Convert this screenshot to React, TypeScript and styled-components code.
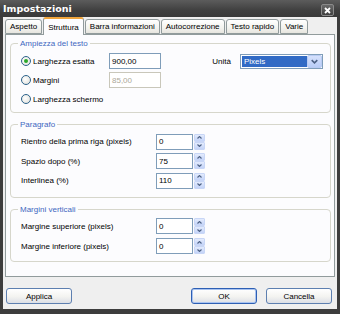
import React from "react";
import styled, { createGlobalStyle } from "styled-components";

const Global = createGlobalStyle`
  html, body { margin: 0; padding: 0; background: #3c3c3c; }
  * { box-sizing: border-box; }
`;

const FONT = `"Liberation Sans", Arial, sans-serif`;

const Window = styled.div`
  width: 340px;
  height: 314px;
  background: #3d3d3d;
  display: flex;
  flex-direction: column;
  padding: 0 3px 5px 3px;
  font-family: ${FONT};
  font-size: 8px;
  color: #000;
`;

const TitleBar = styled.div`
  height: 17px;
  margin: 0 -3px;
  padding: 0 6px 0 3px;
  display: flex;
  align-items: center;
  justify-content: space-between;
  background: linear-gradient(#5c5c5c, #404040 60%, #393939);
`;

const Title = styled.span`
  color: #fff;
  font-family: "DejaVu Sans", sans-serif;
  font-weight: bold;
  font-size: 9.5px;
`;

const CloseButton = styled.div`
  width: 13px;
  height: 12px;
  margin-top: 3px;
  border: 1px solid #8a8a8a;
  border-radius: 2px;
  background: linear-gradient(#6a6a6a, #404040);
  display: flex;
  align-items: center;
  justify-content: center;
`;

const Body = styled.div`
  flex: 1;
  background: #efefef;
  display: flex;
  flex-direction: column;
  padding: 0 2px;
`;

const TabStrip = styled.div`
  height: 17px;
  display: flex;
  align-items: flex-end;
  gap: 1px;
  position: relative;
  z-index: 1;
`;

const Tab = styled.div<{ $active?: boolean }>`
  height: ${(p) => (p.$active ? "18px" : "15px")};
  margin-bottom: ${(p) => (p.$active ? "-1px" : "0")};
  padding: 0 4px;
  border: 1px solid #919b9c;
  border-bottom: ${(p) => (p.$active ? "none" : "1px solid #919b9c")};
  border-top: ${(p) => (p.$active ? "2px solid #f0a53c" : "1px solid #919b9c")};
  border-radius: 3px 3px 0 0;
  background: ${(p) =>
    p.$active ? "#fcfcfe" : "linear-gradient(#ffffff, #f3f3ef 60%, #e6e5df)"};
  display: flex;
  align-items: center;
  white-space: nowrap;
`;

const Panel = styled.div`
  flex: 1;
  border: 1px solid #919b9c;
  background: #fcfcfe;
  padding: 2.5px 3px 0 4px;
  display: flex;
  flex-direction: column;
  gap: 6px;
`;

const Group = styled.fieldset<{ $pt: number; $pb: number }>`
  margin: 0;
  padding: ${(p) => p.$pt}px 7px ${(p) => p.$pb}px 10px;
  border: 1px solid #d6d6cb;
  border-radius: 4px;
  min-width: 0;
`;

const Legend = styled.legend`
  color: #3e67c0;
  padding: 0 2px;
  margin-left: -3px;
  line-height: 11px;
  height: 11px;
`;

const WidthGrid = styled.div`
  display: grid;
  grid-template-columns: 88px 52px 1fr auto 83px;
  grid-auto-rows: 16px;
  row-gap: 3px;
  align-items: center;
`;

const RadioRow = styled.label`
  display: flex;
  align-items: center;
  gap: 2px;
  grid-column: 1;
  white-space: nowrap;
`;

const Radio = styled.span<{ $checked?: boolean }>`
  width: 10px;
  height: 10px;
  border-radius: 50%;
  border: 1px solid #2c628b;
  background: radial-gradient(circle at 40% 40%, #ffffff, #dcdcd6);
  display: flex;
  align-items: center;
  justify-content: center;
  &::after {
    content: "";
    width: 4px;
    height: 4px;
    border-radius: 50%;
    background: ${(p) => (p.$checked ? "#2ba82b" : "transparent")};
  }
`;

const TextBox = styled.div<{ $disabled?: boolean; $w?: number }>`
  width: ${(p) => p.$w ?? 52}px;
  height: 16px;
  border: 1px solid ${(p) => (p.$disabled ? "#c9c7ba" : "#7f9db9")};
  background: #fff;
  color: ${(p) => (p.$disabled ? "#aca899" : "#000")};
  padding-left: 2px;
  display: flex;
  align-items: center;
`;

const UnitLabel = styled.span`
  grid-column: 4;
  grid-row: 1;
  margin-right: 9px;
`;

const Select = styled.div`
  grid-column: 5;
  grid-row: 1;
  height: 15px;
  border: 1px solid #7f9db9;
  background: #fff;
  display: flex;
  padding: 1px 0 1px 1px;
`;

const SelectValue = styled.span`
  flex: 1;
  background: #316ac5;
  color: #fff;
  padding-left: 2px;
  display: flex;
  align-items: center;
`;

const SelectButton = styled.span`
  width: 15px;
  margin: -1px 0;
  border: 1px solid #b9cbf3;
  border-radius: 2px;
  background: linear-gradient(#d6e1fd, #b9cdf7);
  display: flex;
  align-items: center;
  justify-content: center;
`;

const FieldGrid = styled.div<{ $gap: number }>`
  display: grid;
  grid-template-columns: 135px auto auto 1fr;
  grid-auto-rows: 16px;
  row-gap: ${(p) => p.$gap}px;
  align-items: center;
`;

const Spinner = styled.div`
  width: 11px;
  height: 16px;
  margin-left: 1px;
  display: flex;
  flex-direction: column;
`;

const SpinHalf = styled.span`
  flex: 1;
  border: 1px solid #c8d6f6;
  border-radius: 1px;
  background: linear-gradient(#e3ebfd, #c3d3f8);
  display: flex;
  align-items: center;
  justify-content: center;
`;

const ButtonRow = styled.div`
  height: 32px;
  display: flex;
  align-items: flex-start;
  padding: 11px 3px 0 1px;
  gap: 9px;
`;

const Spacer = styled.div`
  flex: 1;
`;

const Button = styled.div<{ $default?: boolean }>`
  width: 66px;
  height: 16px;
  border: 1px solid ${(p) => (p.$default ? "#2d5fb4" : "#5d7fb0")};
  border-radius: 3px;
  background: linear-gradient(#ffffff, #f3f3f0 55%, #dcdfe6);
  box-shadow: ${(p) => (p.$default ? "inset 0 0 0 1px #a9c3f0" : "none")};
  display: flex;
  align-items: center;
  justify-content: center;
`;

const Chevron = ({ up, size = 5 }: { up?: boolean; size?: number }) => (
  <svg width={size} height={size - 2} viewBox="0 0 5 3">
    <path
      d={up ? "M0.5 2.5 L2.5 0.5 L4.5 2.5" : "M0.5 0.5 L2.5 2.5 L4.5 0.5"}
      fill="none"
      stroke="#4d6185"
      strokeWidth="1.1"
    />
  </svg>
);

const SpinBox = ({ value }: { value: string }) => (
  <>
    <TextBox $w={37}>{value}</TextBox>
    <Spinner>
      <SpinHalf>
        <Chevron up />
      </SpinHalf>
      <SpinHalf>
        <Chevron />
      </SpinHalf>
    </Spinner>
  </>
);

const tabs = ["Aspetto", "Struttura", "Barra informazioni", "Autocorrezione", "Testo rapido", "Varie"];

export default function App() {
  return (
    <Window>
      <Global />
      <TitleBar>
        <Title>Impostazioni</Title>
        <CloseButton>
          <svg width="7" height="7" viewBox="0 0 7 7">
            <path d="M1 1 L6 6 M6 1 L1 6" stroke="#fff" strokeWidth="1.8" />
          </svg>
        </CloseButton>
      </TitleBar>
      <Body>
        <TabStrip>
          {tabs.map((t) => (
            <Tab key={t} $active={t === "Struttura"}>
              {t}
            </Tab>
          ))}
        </TabStrip>
        <Panel>
          <Group $pt={4.5} $pb={5}>
            <Legend>Ampiezza del testo</Legend>
            <WidthGrid>
              <RadioRow>
                <Radio $checked />
                Larghezza esatta
              </RadioRow>
              <TextBox>900,00</TextBox>
              <UnitLabel>Unità</UnitLabel>
              <Select>
                <SelectValue>Pixels</SelectValue>
                <SelectButton>
                  <Chevron size={7} />
                </SelectButton>
              </Select>
              <RadioRow>
                <Radio />
                Margini
              </RadioRow>
              <TextBox $disabled>85,00</TextBox>
              <RadioRow>
                <Radio />
                Larghezza schermo
              </RadioRow>
            </WidthGrid>
          </Group>
          <Group $pt={3.5} $pb={8}>
            <Legend>Paragrafo</Legend>
            <FieldGrid $gap={3.5}>
              <span>Rientro della prima riga (pixels)</span>
              <SpinBox value="0" />
              <span />
              <span>Spazio dopo (%)</span>
              <SpinBox value="75" />
              <span />
              <span>Interlinea (%)</span>
              <SpinBox value="110" />
              <span />
            </FieldGrid>
          </Group>
          <Group $pt={3.5} $pb={7}>
            <Legend>Margini verticali</Legend>
            <FieldGrid $gap={4}>
              <span>Margine superiore (pixels)</span>
              <SpinBox value="0" />
              <span />
              <span>Margine inferiore (pixels)</span>
              <SpinBox value="0" />
              <span />
            </FieldGrid>
          </Group>
        </Panel>
        <ButtonRow>
          <Button>Applica</Button>
          <Spacer />
          <Button $default>OK</Button>
          <Button>Cancella</Button>
        </ButtonRow>
      </Body>
    </Window>
  );
}
